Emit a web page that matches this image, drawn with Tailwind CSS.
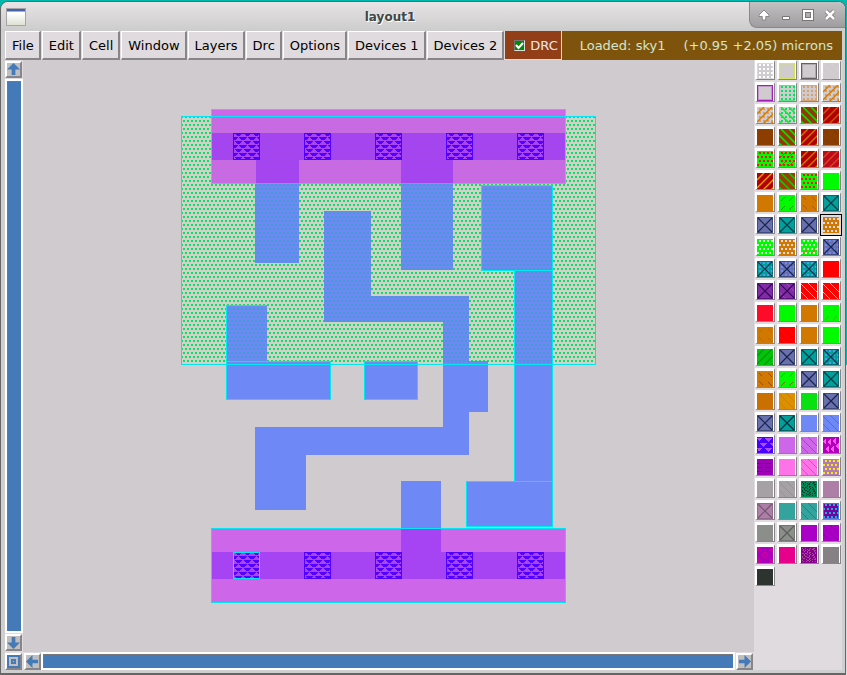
<!DOCTYPE html>
<html lang="en">
<head>
<meta charset="utf-8">
<title>layout1</title>
<script src="https://cdn.jsdelivr.net/npm/@tailwindcss/browser@4"></script>
</head>
<body class="h-screen overflow-hidden bg-linear-to-b from-[#00b8ad] from-54% to-[#dddadd] to-54% pt-px pr-px font-['DejaVu_Sans',sans-serif] text-black">
<div class="flex h-full flex-col overflow-hidden rounded-t-lg border border-b-2 border-[#666] bg-[#cfcfcf]">
  <header class="relative flex h-[29px] shrink-0 items-center bg-linear-to-b from-[#e8e3e5] to-[#cccccc] pl-[5px]">
    <svg class="h-[18px] w-5" viewBox="0 0 20 18" aria-hidden="true"><defs><linearGradient id="wi" x2="0" y2="1"><stop offset=".3" stop-color="#fff"/><stop offset="1" stop-color="#dce0d0"/></linearGradient></defs><rect x=".5" y=".5" width="19" height="17" fill="url(#wi)" stroke="#a3a5a8"/><path d="M1 1h18v2H1z" fill="#4561ae"/><path d="M1 3h18v1H1z" fill="#a5b0d0"/></svg>
    <h1 class="flex-1 pr-[91px] text-center text-[12px] font-bold text-[#414745] [text-shadow:1px_1px_0_#fff]">layout1</h1>
    <div class="absolute top-0 right-0 flex h-[26px] w-24 items-center rounded-bl-lg border-b border-l border-[#888] bg-linear-to-b from-[#c4c1c3] to-[#a09da0] pt-px pl-[3px]">
      <button class="flex w-[22px] justify-center" aria-label="Shade"><svg width="12" height="12" viewBox="0 0 12 12"><path d="M6 1 1 6v1.500h3.300v3.500h3.400V7.500H11V6z" fill="#fff" stroke="#777" stroke-width=".8"/></svg></button>
      <button class="flex w-[22px] justify-center" aria-label="Minimize"><svg width="12" height="12" viewBox="0 0 12 12"><path d="M2.500 7.500h7v3h-7z" fill="#fff" stroke="#777"/></svg></button>
      <button class="flex w-[22px] justify-center" aria-label="Maximize"><svg width="12" height="12" viewBox="0 0 12 12"><path d="M2 2h8v8H2z" fill="none" stroke="#777" stroke-width="4"/><path d="M2 2h8v8H2z" fill="none" stroke="#fff" stroke-width="2"/></svg></button>
      <button class="flex w-[22px] justify-center" aria-label="Close"><svg width="12" height="12" viewBox="0 0 12 12"><path d="m2 2 8 8m0-8-8 8" stroke="#777" stroke-width="4"/><path d="m2 2 8 8m0-8-8 8" stroke="#fff" stroke-width="2.500"/></svg></button>
    </div>
  </header>

  <div class="mr-[3px] mb-[3px] ml-1 flex min-h-0 flex-1 flex-col bg-[#dfdbdf]">
    <nav id="menu" class="flex h-[29px] shrink-0 bg-[#dfdbdf] text-[13px] leading-none"></nav>

    <div class="flex min-h-0 flex-1">
      <div class="flex min-w-0 flex-1 flex-col bg-[#cfcbce]">
        <div class="flex min-h-0 flex-1">
          <div class="flex w-[18px] shrink-0 flex-col bg-[#dfdbdf] pt-px pb-px">
            <button class="h-[17px] w-[17px] border-2 border-t-white border-r-[#888588] border-b-[#888588] border-l-white bg-[#bfbfbf]" aria-label="Scroll up"><svg class="h-full w-full" viewBox="0 0 14 14" fill="#457ab9"><path d="M7 0 0 7h5v6h4V7h5z"/></svg></button>
            <div class="my-px min-h-0 flex-1 border-2 border-white bg-[#457ab9]"><div class="h-full border-t border-l border-[#777]"></div></div>
            <button class="h-[17px] w-[17px] border-2 border-t-white border-r-[#888588] border-b-[#888588] border-l-white bg-[#bfbfbf]" aria-label="Scroll down"><svg class="h-full w-full" viewBox="0 0 14 14" fill="#457ab9"><path d="M7 14 0 7h5V1h4v6h5z"/></svg></button>
          </div>
          <div class="min-w-0 flex-1 overflow-hidden">
            <svg class="h-[594px] w-[731px]" viewBox="23 60 731 594" shape-rendering="crispEdges" role="img" aria-label="Chip layout">
              <defs>
                <pattern id="dg" width="4" height="8" patternUnits="userSpaceOnUse"><path d="M3 0h1v2H3zM0 0h1v2H0zM1 4h2v2H1z" fill="#00e663"/></pattern>
                <pattern id="db" width="4" height="8" patternUnits="userSpaceOnUse"><path d="M3 0h1v2H3zM0 0h1v2H0zM1 4h2v2H1z" fill="#419dcc"/></pattern>
                <pattern id="dp" width="4" height="8" patternUnits="userSpaceOnUse"><path d="M3 0h1v2H3zM0 0h1v2H0zM1 4h2v2H1z" fill="#b378cc"/></pattern>
                <pattern id="dv" width="4" height="8" patternUnits="userSpaceOnUse"><path d="M3 0h1v2H3zM0 0h1v2H0zM1 4h2v2H1z" fill="#9d4be2"/></pattern>
                <pattern id="tri" x="234" y="133" width="9" height="8" patternUnits="userSpaceOnUse"><path d="M1 0h7v1H7v1H6v1H3V2H2V1H1zM0 4h4v1H3v1H2v1H0zM5 4h4v3H7V6H6V5H5z" fill="#5200ff"/></pattern>
                <path id="poly" d="M255 183h44v80h-44zM401 183h52v87h-52zM481 185h72v86h-72zM514 270h39v212h-39zM466 481h87v46h-87zM324 211h47v85h98v65h19v51h-19v43H306v55h-51v-83h188V322H324zM226 305h41v56h64v39H226zM364 361h54v39h-54zM401 481h40v48h-40z"/>
                <clipPath id="well"><path d="M181 116h415v249H181z"/></clipPath>
                <path id="violet" d="M212 133h353v27H453v24h-52v-24H299v24h-43v-24h-44z"/>
                <g id="via"><path d="M234 134h25v25h-25z" fill="#a944f2"/><path d="M234 134h25v25h-25z" fill="url(#tri)"/><path d="M233.500 133.500h26v26h-26z" fill="none" stroke="#5200ff"/></g>
              </defs>
              <path d="M181 116h415v249H181z" fill="#d3cfc9"/>
              <path d="M181 116h415v249H181z" fill="url(#dg)"/>
              <use href="#poly" fill="#6e88f5"/>
              <use href="#poly" fill="url(#db)" clip-path="url(#well)"/>
              <path d="M211 109h355v75H211zM211 528h355v75H211z" fill="#cd66e9"/>
              <path d="M211 116h355v68H211z" fill="url(#dp)"/>
              <use href="#violet" fill="#a643f2"/>
              <use href="#violet" fill="url(#dv)"/>
              <path d="M212 552h189v-23h40v23h124v27H212z" fill="#a643f2"/>
              <g fill="none" stroke="#00e8ef">
                <path d="M181.500 116.500h414v248h-414zM211.500 528.500h354v74h-354z"/>
                <path d="M211.500 184v-74.500h354V184M211 183.500h355" stroke="#8fc0e8" stroke-opacity=".6"/>
                <path d="M481.500 185.500h71v85h-71zM514.500 270.500h38v211h-38zM466.500 481.500h86v45h-86zM226.500 361.500h104v38h-104zM364.500 361.500h53v38h-53zM226.500 361v-55.500h40"/>
              </g>
              <g id="vias"><use href="#via"/><use href="#via" x="71"/><use href="#via" x="142"/><use href="#via" x="213"/><use href="#via" x="284"/></g>
              <use href="#vias" y="419"/>
              <path d="M233.500 552.500h26v26h-26z" fill="none" stroke="#00e8ef"/>
            </svg>
          </div>
        </div>
        <div class="flex h-[18px] shrink-0 items-end bg-[#dfdbdf]">
          <button class="mr-[2px] h-[17px] w-[17px] border-2 border-t-white border-r-[#888588] border-b-[#888588] border-l-white bg-[#bfbfbf]" aria-label="Fit view"><svg class="h-full w-full" viewBox="0 0 13 13" fill="none" stroke="#457ab9" stroke-width="2" shape-rendering="crispEdges"><path d="M1 1h11v11H1zM5 5h3v3H5z"/></svg></button>
          <button class="h-[17px] w-[17px] border-2 border-t-white border-r-[#888588] border-b-[#888588] border-l-white bg-[#bfbfbf]" aria-label="Scroll left"><svg class="h-full w-full" viewBox="0 0 14 14" fill="#457ab9"><path d="M0 7 7 0v5h6v4H7v5z"/></svg></button>
          <div class="mr-px min-w-0 flex-1 self-stretch border-2 border-white bg-[#457ab9]"><div class="h-full border-t border-l border-[#777]"></div></div>
          <button class="mr-px h-[17px] w-[17px] border-2 border-t-white border-r-[#888588] border-b-[#888588] border-l-white bg-[#bfbfbf]" aria-label="Scroll right"><svg class="h-full w-full" viewBox="0 0 14 14" fill="#457ab9"><path d="M14 7 7 0v5H1v4h6v5z"/></svg></button>
        </div>
      </div>
      <aside id="layers" class="grid w-[88px] shrink-0 auto-rows-[22px] grid-cols-[repeat(4,22px)]" aria-label="Layers"></aside>
    </div>
  </div>
</div>

<script>
const menu = document.getElementById('menu');
menu.innerHTML = ['File', 'Edit', 'Cell', 'Window', 'Layers', 'Drc', 'Options', 'Devices 1', 'Devices 2'].map(t =>
  `<button class="mr-px shrink-0 border-t border-r-2 border-b-2 border-l border-t-white border-r-[#888588] border-b-[#888588] border-l-white pr-[5px] pl-[6px] whitespace-nowrap">${t}</button>`).join('') +
  `<label class="flex w-[57px] shrink-0 items-center gap-[5px] border-r border-b border-[#dfdbdf] bg-[#923f18] pl-[9px] text-[#f0e8e8]"><input type="checkbox" checked class="h-[11px] w-[11px] shrink-0 appearance-none border border-[#777] border-r-[#ddd] border-b-[#ddd] bg-[#008a00] bg-[url('data:image/svg+xml,%3Csvg%20xmlns=%22http://www.w3.org/2000/svg%22%20viewBox=%220%200%209%209%22%3E%3Cpath%20d=%22M1%204l2.500%203L8%202%22%20fill=%22none%22%20stroke=%22white%22%20stroke-width=%222%22/%3E%3C/svg%3E')]">DRC</label>
  <div class="flex min-w-0 flex-1 items-center justify-end gap-[18px] bg-[#7e540d] pr-[9px] whitespace-nowrap text-[#d3e5cf]"><span>Loaded: sky1</span><span>(+0.95 +2.05) microns</span></div>`;

const P = {
  dots: c => `<path d="${grid(4, 0)}" fill="${c}"/>`,
  dots2: c => `<path d="${grid(4, 2)}" fill="${c}"/>`,
  up: c => `<path d="M0 7 7 0M0 15 15 0M6 17 17 6M14 17l3-3" stroke="${c}" stroke-width="1.400" shape-rendering="auto"/>`,
  down: c => `<path d="M10 0l7 7M2 0l15 15M0 6l11 11M0 14l3 3" stroke="${c}" stroke-width="1.600" shape-rendering="auto"/>`,
  thin: c => `<path d="M7 0l10 10M0 1l16 16M0 9l8 8" stroke="${c}" stroke-width=".8" shape-rendering="auto"/>`,
  dash: c => `<path d="M2 6l4-4M10 6l4-4M2 15l4-4M10 15l4-4" stroke="${c}" stroke-width=".8" shape-rendering="auto"/>`,
  dashd: c => `<path d="M2 2l3 3M11 2l4 4M2 10l4 4M11 11l4 4" stroke="${c}" stroke-width=".8" shape-rendering="auto"/>`,
  x: c => `<path d="M1 1l14 14M15 1 1 15" stroke="${c}" stroke-width="1.200" shape-rendering="auto"/><path d="M.500.500h15v15H.500z" fill="none" stroke="${c}" stroke-opacity=".5"/>`,
  box: c => `<path d="M.500.500h15v15H.500z" fill="none" stroke="${c}"/><path d="M1.500 1.500h13v13h-13z" fill="none" stroke="${c}" stroke-opacity=".3"/>`,
  edge: c => `<path d="M.500.500h15v15H.500z" fill="none" stroke="${c}"/>`,
  tri: c => `<path d="M0 1h5L3 4H2zM7 1h8l-4 4zM2 6h8L6 10zM12 6h5v4zM0 11h5l-3 4zM7 11h8l-4 4z" fill="${c}"/>`,
  vtri: c => `<path d="M3 1v7L0 4zM8 1v7L4 5zM13 1v7L9 4zM16 5v8l-4-4zM6 8v8l-4-4zM11 8v8l-4-4z" fill="${c}"/>`,
  rows: c => `<path d="M0 4.500h17M0 8.500h17M0 12.500h17" stroke="${c}" stroke-dasharray="6 2"/>`,
  weave: c => `<path d="${weave()}" fill="${c}"/>`,
  rings: c => `<path d="M8 5l3 3-3 3-3-3zM0 3l3-3M13 0l3 3M0 13l3 3M16 13l-3 3M2 5v-2h2M12 3h2v2M2 11v2h2M14 11v2h-2" fill="none" stroke="${c}" stroke-width="1.500" shape-rendering="auto"/>`,
};
function grid(step, shift) {
  let d = '';
  for (let y = 1, r = 0; y < 15; y += step, r++)
    for (let x = (r % 2 ? 2 - shift : 2); x < 16; x += step) d += `M${x} ${y}h2v2h-2z`;
  return d;
}
function weave() {
  let d = '';
  for (let y = 1; y < 15; y++)
    for (let x = 1; x < 15; x++)
      if ((x * 3 + y * 5 + (x >> 2) * (y >> 1)) % 4 < 2 && (x + y) % 3) d += `M${x} ${y}h1v1h-1z`;
  return d;
}
const g = '#cfcbce', G = '#00fb00', O = '#d07800', S = '#6970ad', T = '#00a09c', R = '#b00000', B = '#8b3e00';
const swatches = [
  [g,'edge #d8d8d8','dots #ffffff'],[g,'box #d5e45d'],[g,'box #656165'],[g,'thin #d9dc8c'],
  [g,'box #a51dbd'],[g,'edge #62df8a','dots #00e65c'],[g,'edge #d5a477','dots #d6a06a'],[g,'dots #d6a06a','up #d07800'],
  [g,'dots #d6a06a','up #d07800'],[g,'dots #00e65c','down #00f52c'],[B,'down #00e800'],[R,'up #d05b00'],
  [B],[B,'down #00e800'],[R,'up #d07800'],[B,'dashd #7b3500'],
  [G,'dots2 #ff1010'],[G,'dots2 #ff1010','dash #a05000'],[R,'up #d07800'],['#c1071c','up #d04b1c'],
  [R,'up #eca000'],['#984100','down #00d000'],[G,'dots2 #ff1010'],[G],
  [O],[G,'dash #167b00'],[O,'dashd #a85000'],[T,'x #003b43'],
  [S,'x #15254a'],[T,'x #003b43'],[S,'x #15254a'],[O,'dots2 #dfdbdf'],
  [G,'dots2 #dfdbdf'],[O,'dots2 #dfdbdf'],[G,'dots2 #dfdbdf','dash #c06b10'],[S,'dots #6e88f5','x #15254a'],
  [T,'dots #4f9bf0','x #003b43'],[S,'dots #6e88f5','x #15254a'],[T,'dots #4f9bf0','x #003b43'],['#ff0000'],
  ['#812ba5','x #35005a'],['#812ba5','thin #777096','x #35005a'],['#ff0000','thin #ffcccc'],['#ff0000','thin #ffcccc'],
  ['#ff0b2a'],[G],[O],[G,'dash #22bf00'],
  [O,'dashd #b46800'],['#ff0000','thin #b43800'],[O,'thin #cd7600'],[G],
  ['#00c40a','up #009b0a'],[S,'x #15254a'],[T,'x #003b43'],[T,'dots #4f9bf0','x #003b43'],
  [O,'dashd #884000'],[G,'dash #805000'],[S,'x #15254a'],[T,'x #003b43'],
  ['#ca7000'],['#dc9000','thin #cc7900'],['#00e60a','up #20d228'],[S,'x #15254a'],
  [S,'x #15254a'],[T,'x #002d33'],['#6e88f5'],['#6e88f5','thin #5264bd'],
  ['#4a00ff','tri #b04df1'],['#cd66e9'],['#cd66e9','thin #b235a6'],['#b000bd','vtri #ff55ee'],
  ['#9d00b7','rows #650084'],['#ff72e8'],['#ff72e8','thin #d048b5'],['#b47ab5','dots2 #f5f000'],
  ['#a5a1a5'],['#a5a1a5','thin #b98759'],['#008a55','weave #003d35'],['#ae7fa6'],
  ['#ae7fa6','x #735572'],['#34a39d'],['#34a39d','thin #168078'],['#7500a8','edge #506ee5','dots2 #14b5bd'],
  ['#8c8e8c'],['#8c8e8c','x #5c5e5c'],['#aa00c6'],['#aa00c6','thin #7b008f'],
  ['#aa00bd','rings #d0009b'],['#e6008c'],['#85008f','weave #a54b8f'],['#858185'],
  ['#2d342f'],
];
document.getElementById('layers').innerHTML = swatches.map(([bg, ...ls], i) => {
  const art = ls.map(l => { const [k, c] = l.split(' '); return P[k](c); }).join('');
  const svg = `<svg class="h-4 w-4" viewBox="0 0 16 16" shape-rendering="crispEdges"><path d="M0 0h16v16H0z" fill="${bg}"/>${art}</svg>`;
  return i === 31
    ? `<button class="h-[22px] w-[22px] border border-black bg-[#dfdbdf] p-[2px] outline-1 -outline-offset-1 outline-black" aria-label="Layer ${i + 1}">${svg}</button>`
    : `<button class="ml-px h-5 w-5 border-t-2 border-r border-b border-l-2 border-t-white border-r-[#888588] border-b-[#888588] border-l-white bg-white" aria-label="Layer ${i + 1}">${svg}</button>`;
}).join('');
</script>
</body>
</html>
